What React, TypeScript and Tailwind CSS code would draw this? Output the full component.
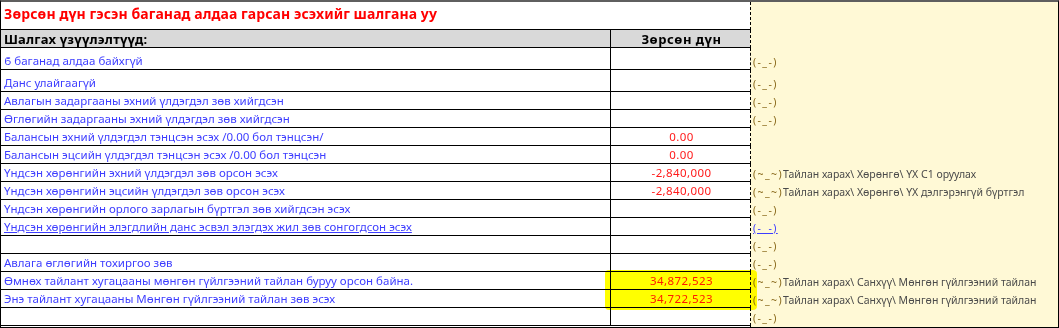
import React from "react";

type Row = {
  label: string;
  value?: string;
  face?: string;
  note?: string;
  tall?: boolean;
  link?: boolean;
};

const FACE = "(-_-)";
const WAVY = "(~_~)";

const rows: Row[] = [
  { label: "ϐ баганад алдаа байхгүй", face: FACE, tall: true },
  { label: "Данс улайгаагүй", face: FACE, tall: true },
  { label: "Авлагын задаргааны эхний үлдэгдэл зөв хийгдсэн", face: FACE },
  { label: "Өглөгийн задаргааны эхний үлдэгдэл зөв хийгдсэн", face: FACE },
  { label: "Балансын эхний үлдэгдэл тэнцсэн эсэх /0.00 бол тэнцсэн/", value: "0.00" },
  { label: "Балансын эцсийн үлдэгдэл тэнцсэн эсэх /0.00 бол тэнцсэн", value: "0.00" },
  {
    label: "Үндсэн хөрөнгийн эхний үлдэгдэл зөв орсон эсэх",
    value: "-2,840,000",
    face: WAVY,
    note: "Тайлан харах\\ Хөрөнгө\\ ҮХ С1 оруулах",
  },
  {
    label: "Үндсэн хөрөнгийн эцсийн үлдэгдэл зөв орсон эсэх",
    value: "-2,840,000",
    face: WAVY,
    note: "Тайлан харах\\ Хөрөнгө\\ ҮХ дэлгэрэнгүй бүртгэл",
  },
  { label: "Үндсэн хөрөнгийн орлого зарлагын бүртгэл зөв хийгдсэн эсэх", face: FACE },
  {
    label: "Үндсэн хөрөнгийн элэгдлийн данс эсвэл элэгдэх жил зөв сонгогдсон эсэх",
    face: FACE,
    link: true,
  },
  { label: "", face: FACE },
  { label: "Авлага өглөгийн тохиргоо зөв", face: FACE },
  {
    label: "Өмнөх тайлант хугацааны мөнгөн гүйлгээний тайлан буруу орсон байна.",
    value: "34,872,523",
    face: WAVY,
    note: "Тайлан харах\\ Санхүү\\ Мөнгөн гүйлгээний тайлан",
  },
  {
    label: "Энэ тайлант хугацааны Мөнгөн гүйлгээний тайлан зөв эсэх",
    value: "34,722,523",
    face: WAVY,
    note: "Тайлан харах\\ Санхүү\\ Мөнгөн гүйлгээний тайлан",
  },
  { label: "", face: FACE },
];

const noteCell = "flex-1 bg-[#fff9d6] border-l border-dashed border-black";

export default function App() {
  return (
    <div className="relative w-[1059px] h-[328px] bg-white border-l border-r border-b border-black border-t-2 border-t-[#5f5f5f] flex flex-col font-['Noto_Sans',sans-serif] text-[11.5px] leading-[16px] overflow-hidden">
      {/* title */}
      <div className="flex h-[28px] shrink-0">
        <div className="w-[749px] border-b border-black flex items-center px-[3px] pb-[4px] text-[14px] tracking-[0.08px] font-bold text-[#ff0000]">
          Зөрсөн дүн гэсэн баганад алдаа гарсан эсэхийг шалгана уу
        </div>
        <div className={noteCell} />
      </div>

      {/* header */}
      <div className="flex h-[18px] shrink-0">
        <div className="w-[610px] bg-[#d9d9d9] border-b border-r border-black flex items-center px-[3px] text-[13px] tracking-[0.2px] font-bold text-black">
          Шалгах үзүүлэлтүүд:
        </div>
        <div className="w-[139px] bg-[#d9d9d9] border-b border-black flex items-center justify-center pl-[2px] text-[13px] tracking-[0.5px] font-bold text-black">
          Зөрсөн дүн
        </div>
        <div className={noteCell} />
      </div>

      {rows.map((r, i) => (
        <div key={i} className={`flex shrink-0 ${r.tall ? "h-[22px]" : "h-[18px]"}`}>
          <div
            className={`w-[610px] border-b border-r border-black flex items-end px-[3px] whitespace-nowrap text-[#3d3dff] ${
              r.link ? "underline" : ""
            }`}
          >
            {r.label}
          </div>
          <div className="w-[139px] border-b border-black flex items-end justify-center pl-[2px] text-[#ff1a1a] tracking-[0.4px]">
            {r.value}
          </div>
          <div className={`${noteCell} flex items-end px-[2px] whitespace-nowrap text-[10.5px]`}>
            <span
              className={`tracking-[1.4px] ${r.link ? "text-[#3d3dff] underline" : "text-[#8a6a1c]"}`}
            >
              {r.face}
            </span>
            {r.note && <span className="text-[#4a4a4a]">{r.note}</span>}
          </div>
        </div>
      ))}

      <div className="flex flex-1">
        <div className="w-[749px]" />
        <div className={noteCell} />
      </div>

      {/* highlighter mark */}
      <div className="absolute left-[604px] top-[268px] w-[152px] h-[40px] bg-[#ffff00] mix-blend-multiply rounded-[4px]" />
    </div>
  );
}
